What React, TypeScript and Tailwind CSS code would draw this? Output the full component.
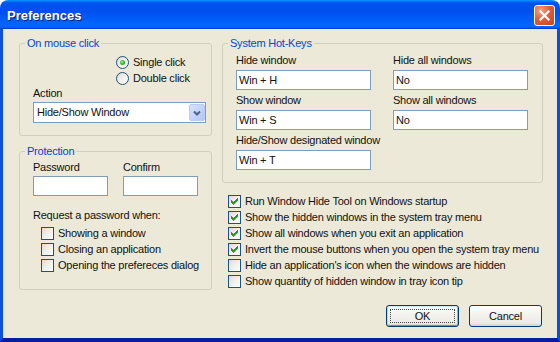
import React from "react";

const CHECK_PATH =
  "M6 0h1v1h-1z M5 1h2v1h-2z M0 2h1v1h-1z M4 2h3v1h-3z M0 3h2v1h-2z M3 3h3v1h-3z M0 4h5v1h-5z M1 5h3v1h-3z M2 6h1v1h-1z";

function CheckBox({ checked, label }: { checked?: boolean; label: string }) {
  return (
    <div className="flex h-[16px] items-center gap-[4px]">
      <span className="flex h-[13px] w-[13px] shrink-0 items-center justify-center border border-[#1C5180] bg-[linear-gradient(135deg,#DCDCD7_0%,#F2F2EE_55%,#FFFFFF_100%)]">
        {checked && (
          <svg width="7" height="7" viewBox="0 0 7 7" shapeRendering="crispEdges">
            <path fill="#21A121" d={CHECK_PATH} />
          </svg>
        )}
      </span>
      <span className="whitespace-nowrap">{label}</span>
    </div>
  );
}

function Radio({ checked, label }: { checked?: boolean; label: string }) {
  return (
    <div className="flex h-[16px] items-center gap-[4px]">
      <span className="flex h-[13px] w-[13px] shrink-0 items-center justify-center rounded-full border border-[#1C5180] bg-[linear-gradient(135deg,#DCDCD7_0%,#F2F2EE_55%,#FFFFFF_100%)]">
        {checked && (
          <span className="h-[5px] w-[5px] rounded-full bg-[radial-gradient(circle_at_40%_40%,#A6F19E_0%,#3DBA36_45%,#1B8E17_100%)]" />
        )}
      </span>
      <span className="whitespace-nowrap">{label}</span>
    </div>
  );
}

function Group({
  title,
  className,
  children,
}: {
  title: string;
  className: string;
  children: React.ReactNode;
}) {
  return (
    <div className={`relative rounded-[3px] border border-[#D0D0BF] ${className}`}>
      <span className="absolute left-[5px] top-[-8px] bg-[#ECE9D8] px-[2px] leading-[14px] text-[#0046D5]">
        {title}
      </span>
      {children}
    </div>
  );
}

function TextBox({ value, w }: { value?: string; w: string }) {
  return (
    <div className={`h-[20px] ${w} border border-[#7F9DB9] bg-white pl-[2px] leading-[18px]`}>
      {value}
    </div>
  );
}

function Field({ label, value }: { label: string; value?: string }) {
  return (
    <div className="flex flex-col">
      <div className="h-[14px] whitespace-nowrap leading-[14px]">{label}</div>
      <div className="mt-[3px]">
        <TextBox value={value} w="w-[135px]" />
      </div>
    </div>
  );
}

function Button({ label, focused }: { label: string; focused?: boolean }) {
  return (
    <div
      className={`relative flex h-[22px] w-[73px] items-center justify-center rounded-[3px] border border-[#003C74] bg-[linear-gradient(to_bottom,#FFFFFF_0%,#F4F3EE_40%,#ECEBE6_85%,#D6D0C5_100%)] ${
        focused
          ? "shadow-[inset_0_1px_0_#CEE7FF,inset_1px_0_0_#BCD4F6,inset_-1px_0_0_#89ADE4,inset_0_-1px_0_#6982EE]"
          : ""
      }`}
    >
      {focused && (
        <span className="absolute inset-[3px] border border-dotted border-[#444]" />
      )}
      <span className="leading-[14px]">{label}</span>
    </div>
  );
}

export default function App() {
  return (
    <div className="h-[342px] w-[560px] bg-white">
      <div className="flex h-[342px] w-[560px] flex-col overflow-hidden rounded-t-[8px] font-['Liberation_Sans',Arial,sans-serif] text-[11px] tracking-[-0.22px] text-[#111]">
        {/* Title bar */}
        <div className="flex h-[29px] shrink-0 items-start justify-between bg-[linear-gradient(to_bottom,#0997FF_0%,#0053EE_10%,#0050EE_40%,#0066FF_86%,#0066FF_92%,#005BFF_95%,#003DD7_97%,#003DD7_100%)] pl-[7px] pr-[5px]">
          <div className="pt-[8px] text-[13px] font-bold leading-[15px] tracking-normal text-white [text-shadow:1px_1px_0_#0A1F7A]">
            Preferences
          </div>
          <div className="mt-[5px] flex h-[21px] w-[21px] items-center justify-center rounded-[3px] border border-white bg-[radial-gradient(circle_at_30%_25%,#F0A48A_0%,#E0603C_45%,#C8401C_100%)]">
            <svg width="11" height="11" viewBox="0 0 11 11">
              <path d="M1.5 1.5 L9.5 9.5 M9.5 1.5 L1.5 9.5" stroke="white" strokeWidth="2.2" strokeLinecap="square" />
            </svg>
          </div>
        </div>

        {/* Body */}
        <div className="flex flex-1 border-x-[3px] border-b-[4px] border-x-[#0A4FE0] border-b-[#001EA0] bg-[#ECE9D8]">
          <div className="flex flex-1 gap-[10px] pl-[16px] pr-[14px] pt-[14px]">
            {/* Left column */}
            <div className="flex w-[193px] flex-col gap-[15px]">
              <Group title="On mouse click" className="h-[93px]">
                <div className="pl-[96px] pt-[10px]">
                  <Radio checked label="Single click" />
                  <Radio label="Double click" />
                </div>
                <div className="pl-[13px]">
                  <div className="h-[14px] leading-[14px]">Action</div>
                  <div className="mt-[2px] flex h-[21px] w-[173px] items-center justify-between border border-[#7F9DB9] bg-white pl-[3px]">
                    <span className="whitespace-nowrap">Hide/Show Window</span>
                    <span className="flex h-[17px] w-[16px] items-center justify-center rounded-[2px] border border-[#B9CCF5] bg-[linear-gradient(135deg,#D8E4FD_0%,#C1D3FB_55%,#B1C6F7_100%)]">
                      <svg width="8" height="6" viewBox="0 0 8 6">
                        <path d="M1 1.5 L4 4.5 L7 1.5" fill="none" stroke="#4D6185" strokeWidth="2" />
                      </svg>
                    </span>
                  </div>
                </div>
              </Group>

              <Group title="Protection" className="h-[139px]">
                <div className="pl-[13px] pt-[8px]">
                  <div className="flex gap-[15px]">
                    <div className="flex flex-col">
                      <div className="h-[14px] leading-[14px]">Password</div>
                      <div className="mt-[2px]">
                        <TextBox w="w-[75px]" />
                      </div>
                    </div>
                    <div className="flex flex-col">
                      <div className="h-[14px] leading-[14px]">Confirm</div>
                      <div className="mt-[2px]">
                        <TextBox w="w-[75px]" />
                      </div>
                    </div>
                  </div>
                  <div className="mt-[12px] h-[14px] leading-[14px]">Request a password when:</div>
                  <div className="mt-[3px] pl-[8px]">
                    <CheckBox label="Showing a window" />
                    <CheckBox label="Closing an application" />
                    <CheckBox label="Opening the prefereces dialog" />
                  </div>
                </div>
              </Group>
            </div>

            {/* Right column */}
            <div className="flex w-[321px] flex-col">
              <Group title="System Hot-Keys" className="h-[140px]">
                <div className="flex flex-col gap-[3px] pl-[13px] pt-[9px]">
                  <div className="flex gap-[22px]">
                    <Field label="Hide window" value="Win + H" />
                    <Field label="Hide all windows" value="No" />
                  </div>
                  <div className="flex gap-[22px]">
                    <Field label="Show window" value="Win + S" />
                    <Field label="Show all windows" value="No" />
                  </div>
                  <div className="flex">
                    <Field label="Hide/Show designated window" value="Win + T" />
                  </div>
                </div>
              </Group>

              <div className="mt-[10px] pl-[6px]">
                <CheckBox checked label="Run Window Hide Tool on Windows startup" />
                <CheckBox checked label="Show the hidden windows in the system tray menu" />
                <CheckBox checked label="Show all windows when you exit an application" />
                <CheckBox checked label="Invert the mouse buttons when you open the system tray menu" />
                <CheckBox label="Hide an application's icon when the windows are hidden" />
                <CheckBox label="Show quantity of hidden window in tray icon tip" />
              </div>

              <div className="mt-[16px] flex justify-end gap-[10px] pr-[1px]">
                <Button focused label="OK" />
                <Button label="Cancel" />
              </div>
            </div>
          </div>
        </div>
      </div>
    </div>
  );
}
